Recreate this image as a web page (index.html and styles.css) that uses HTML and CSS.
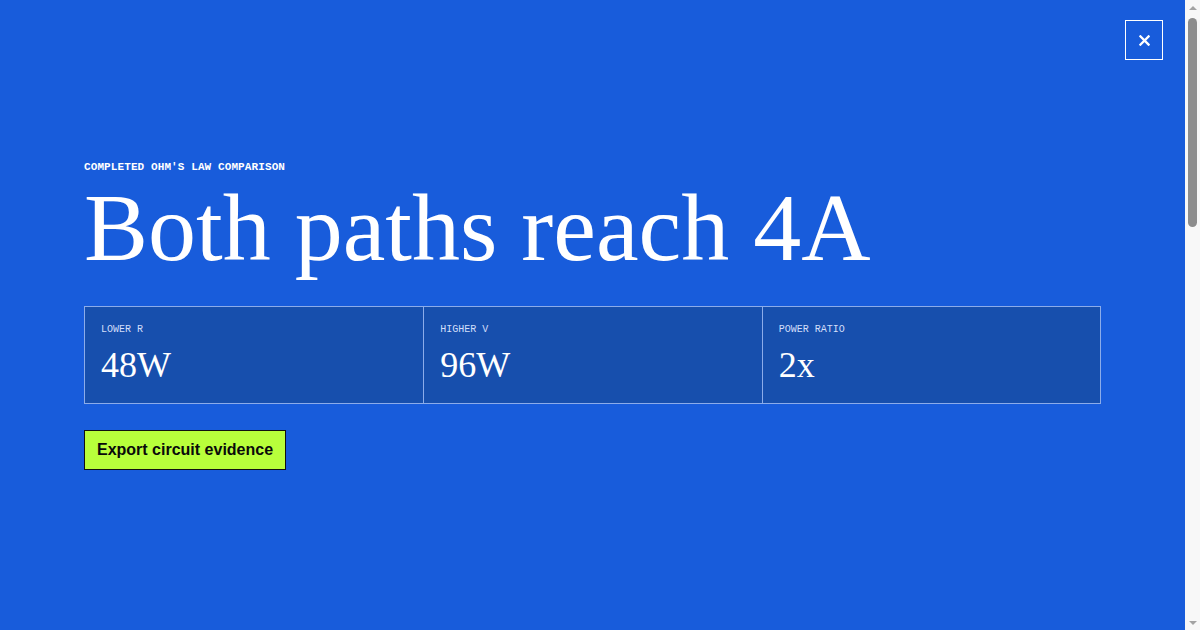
FILE: index.html
```html
<!DOCTYPE html>
<html lang="en">
<head>
<meta charset="utf-8">
<title>Both paths reach 4A</title>
<link rel="stylesheet" href="styles.css">
</head>
<body>
<div class="overlay">
  <div class="scroller">
    <div class="page">
      <button class="close" type="button" aria-label="Close">
        <svg class="close-icon" viewBox="0 0 12 12" width="11" height="11" aria-hidden="true">
          <path d="M1.5 1.5 L10.5 10.5 M10.5 1.5 L1.5 10.5" stroke="#ffffff" stroke-width="2.5" stroke-linecap="square" fill="none"/>
        </svg>
      </button>
      <main class="summary">
        <p class="eyebrow">COMPLETED OHM'S LAW COMPARISON</p>
        <h1 class="title">Both paths reach 4A</h1>
        <div class="stats">
          <div class="stat">
            <div class="stat-label">LOWER R</div>
            <div class="stat-value">48W</div>
          </div>
          <div class="stat">
            <div class="stat-label">HIGHER V</div>
            <div class="stat-value">96W</div>
          </div>
          <div class="stat">
            <div class="stat-label">POWER RATIO</div>
            <div class="stat-value">2x</div>
          </div>
        </div>
        <button class="export" type="button">Export circuit evidence</button>
      </main>
    </div>
  </div>
  <div class="scrollbar" aria-hidden="true">
    <div class="sb-arrow sb-up"></div>
    <div class="sb-track"><div class="sb-thumb"></div></div>
    <div class="sb-arrow sb-down"></div>
  </div>
</div>
</body>
</html>
```
FILE: styles.css
```css
html, body {
  margin: 0;
  padding: 0;
}
body {
  background: #185cdb;
  color: #ffffff;
  font-family: "Liberation Serif", "Times New Roman", serif;
}
.overlay {
  position: fixed;
  inset: 0;
  display: flex;
  background: #185cdb;
}
.scroller {
  flex: 1;
  overflow-y: auto;
  scrollbar-width: none;
}
.page {
  position: relative;
  min-height: 1785px;
}
.scrollbar {
  width: 15px;
  flex: none;
  background: #f8f8f8;
  display: flex;
  flex-direction: column;
}
.sb-arrow {
  height: 15px;
  display: flex;
  align-items: center;
  justify-content: center;
}
.sb-arrow::before {
  content: "";
  width: 0;
  height: 0;
  border-left: 4px solid transparent;
  border-right: 4px solid transparent;
}
.sb-up::before {
  border-bottom: 4px solid #a3a3a3;
}
.sb-down::before {
  border-top: 4px solid #a3a3a3;
}
.sb-track {
  flex: 1;
  padding: 3px 3px 0 3px;
}
.sb-thumb {
  height: 209px;
  background: #8d8d8d;
  border-radius: 5px;
}
.close {
  position: absolute;
  top: 20px;
  right: 22px;
  width: 38px;
  height: 40px;
  background: transparent;
  border: 1px solid #ffffff;
  padding: 0;
  display: flex;
  align-items: center;
  justify-content: center;
  cursor: pointer;
}
.close-icon {
  display: block;
}
.summary {
  padding: 160px 84px 0;
}
.eyebrow {
  margin: 0;
  font-family: "Liberation Mono", "Courier New", monospace;
  font-weight: bold;
  font-size: 11px;
  letter-spacing: 0.1px;
  line-height: 14px;
}
.title {
  margin: 4px 0 0;
  font-weight: normal;
  font-size: 96px;
  line-height: 100px;
}
.stats {
  margin-top: 28px;
  display: grid;
  grid-template-columns: 1fr 1fr 1fr;
  border: 1px solid #8cacea;
  background: #174fad;
}
.stat {
  padding: 17px 16px 17px;
  border-left: 1px solid #8cacea;
}
.stat:first-child {
  border-left: none;
}
.stat-label {
  font-family: "Liberation Mono", "Courier New", monospace;
  font-size: 10px;
  line-height: 12px;
  color: #d2defa;
}
.stat-value {
  margin-top: 8px;
  font-size: 36px;
  line-height: 42px;
}
.export {
  margin-top: 26px;
  height: 40px;
  padding: 0 12px;
  background: #b8ff3b;
  color: #0a0a0a;
  border: 1px solid #111111;
  font-family: "Liberation Sans", Arial, sans-serif;
  font-weight: bold;
  font-size: 16px;
  cursor: pointer;
}
```
